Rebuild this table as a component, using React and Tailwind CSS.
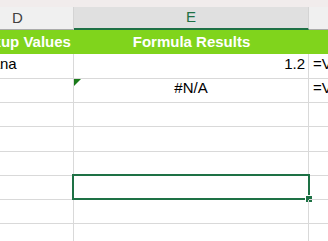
import React from "react";

const font = { fontFamily: '"Liberation Sans", Arial, sans-serif' };

const rows = [
  { h: "h-[25px]", d: "Banana", e: "1.2", eAlign: "right", f: "=V" },
  { h: "h-[24px]", d: "", e: "#N/A", eAlign: "center", f: "=V", flag: true },
  { h: "h-[24px]" },
  { h: "h-[25px]" },
  { h: "h-[24px]" },
  { h: "h-[24px]", selected: true },
  { h: "h-[24px]" },
  { h: "h-[24px]" },
];

function Cell({ children, className = "" }) {
  return (
    <div
      className={`relative flex items-end pb-[3px] border-r border-b border-[#d9d9d9] overflow-visible whitespace-nowrap text-[15px] text-black ${className}`}
    >
      {children}
    </div>
  );
}

export default function App() {
  return (
    <div className="w-[328px] h-[241px] overflow-hidden bg-white" style={font}>
      <div className="h-[7px] bg-[#f1ecec]" />
      <div className="ml-[-38px] grid grid-cols-[112px_235px_120px]">
        {/* column letters */}
        <div className="h-[23px] flex items-center justify-center bg-[#f0f0f0] border-r border-[#d4d4d4] border-b border-b-[#ababab] text-[15px] text-[#404040]">
          D
        </div>
        <div className="h-[23px] flex items-center justify-center bg-[#e0e0e0] border-r border-[#d4d4d4] border-b-2 border-b-[#1e7145] text-[15px] text-[#1e7145]">
          E
        </div>
        <div className="h-[23px] bg-[#f0f0f0] border-b border-b-[#ababab]" />

        {/* title band */}
        <div className="col-span-3 h-[24px] grid grid-cols-[112px_235px_120px] bg-[#80d41c] text-white font-bold text-[15px]">
          <div className="flex items-center justify-center whitespace-nowrap">Lookup Values</div>
          <div className="flex items-center justify-center whitespace-nowrap">Formula Results</div>
          <div />
        </div>

        {rows.map((r, i) => (
          <React.Fragment key={i}>
            <Cell className={`${r.h} pl-[3px]`}>{r.d}</Cell>
            <Cell
              className={`${r.h} px-[3px] ${
                r.eAlign === "right" ? "justify-end" : r.eAlign === "center" ? "justify-center" : ""
              }`}
            >
              {r.flag && (
                <span className="absolute left-0 top-0 w-0 h-0 border-t-[7px] border-t-[#1a7a1a] border-r-[7px] border-r-transparent" />
              )}
              {r.e}
              {r.selected && (
                <span className="absolute left-[-2px] top-[-2px] right-[-2px] bottom-[-1px] border-2 border-[#1e7145] pointer-events-none">
                  <span className="absolute right-[-4px] bottom-[-4px] w-[6px] h-[6px] bg-[#1e7145] outline outline-1 outline-white" />
                </span>
              )}
            </Cell>
            <Cell className={`${r.h} pl-[4px] border-r-0`}>{r.f}</Cell>
          </React.Fragment>
        ))}
      </div>
    </div>
  );
}
